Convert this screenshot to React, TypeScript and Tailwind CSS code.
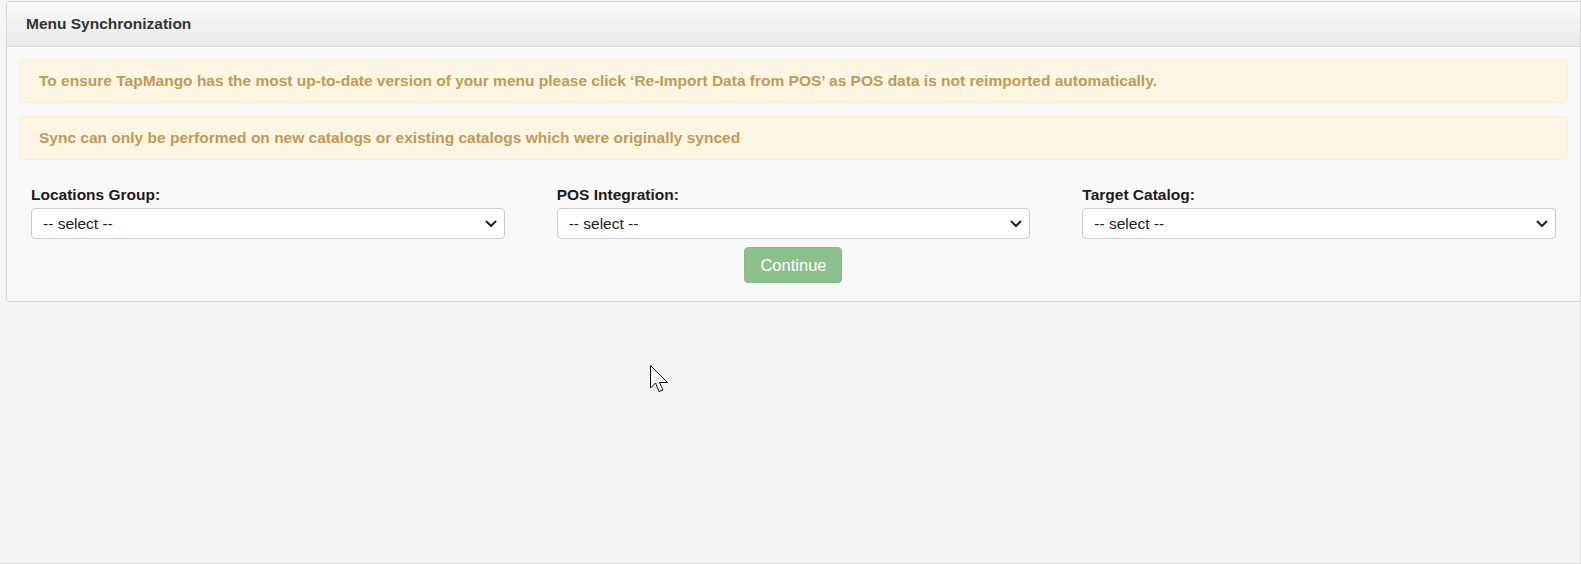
import React from 'react';

const FONT = { fontFamily: '"Liberation Sans", Arial, sans-serif' };

const Chevron: React.FC = () => (
    <svg width="12" height="8" viewBox="0 0 12 8" className="pointer-events-none absolute right-[8px] top-1/2 -translate-y-1/2">
        <path d="M1.5 1.5 L6 6 L10.5 1.5" fill="none" stroke="#222" strokeWidth="2" strokeLinecap="round" strokeLinejoin="round" />
    </svg>
);

const SelectField: React.FC<{ label: string }> = ({ label }) => (
    <div className="flex w-full flex-col">
        <label className="mb-[3px] text-[15.5px] font-bold leading-[20px] text-[#1b1b1b]">{label}</label>
        <div className="relative">
            <select
                className="h-[31px] w-full appearance-none rounded-[4px] border border-[#cccccc] bg-white pl-[11px] text-[15.5px] text-[#222] outline-none"
                style={FONT}
                defaultValue=""
            >
                <option value="">-- select --</option>
            </select>
            <Chevron />
        </div>
    </div>
);

const Alert: React.FC<{ children: React.ReactNode; className?: string }> = ({ children, className }) => (
    <div className={`flex h-[44px] items-center rounded-[4px] border border-[#fbeed5] bg-[#fdf6e3] px-[19px] text-[15.5px] font-bold text-[#c19a58] ${className ?? ''}`}>
        {children}
    </div>
);

export default function App() {
    return (
        <div className="relative h-[564px] w-full border-r border-b border-[#dcdcdc] bg-[#f4f4f4] pl-[6px] pt-[1px]" style={FONT}>
            <div className="-mr-px rounded-[3px] border border-[#d5d5d5] bg-[#f9f9f9]">
                <div className="flex h-[45px] items-center border-b border-[#d9d9d9] bg-gradient-to-b from-[#fbfbfb] to-[#e9e9e9] px-[19px] text-[15.5px] font-bold text-[#333]">
                    Menu Synchronization
                </div>
                <div className="px-[12px] pt-[12px] pb-[18px]">
                    <Alert>
                        To ensure TapMango has the most up-to-date version of your menu please click ‘Re-Import Data from POS’ as POS data is not reimported automatically.
                    </Alert>
                    <Alert className="mt-[13px]">
                        Sync can only be performed on new catalogs or existing catalogs which were originally synced
                    </Alert>
                    <div className="mt-[25px] grid grid-cols-3 gap-x-[52px] px-[12px]">
                        <SelectField label="Locations Group:" />
                        <div className="flex flex-col items-center">
                            <SelectField label="POS Integration:" />
                            <button
                                disabled
                                className="mt-[8px] h-[36px] w-[98px] rounded-[4px] border border-[#86bd86] bg-[#8cc18c] text-[16.5px] text-white"
                                style={FONT}
                            >
                                Continue
                            </button>
                        </div>
                        <SelectField label="Target Catalog:" />
                    </div>
                </div>
            </div>

            {/* mouse pointer */}
            <svg width="19" height="28" viewBox="0 0 19 28" className="absolute left-[650px] top-[365px]">
                <path d="M0.5 0.5 V23 L5.5 18 L9 26.5 L13 25 L9.5 17.5 H17.5 Z" fill="#fff" stroke="#111" strokeWidth="1" strokeLinejoin="miter" />
            </svg>
        </div>
    );
}
